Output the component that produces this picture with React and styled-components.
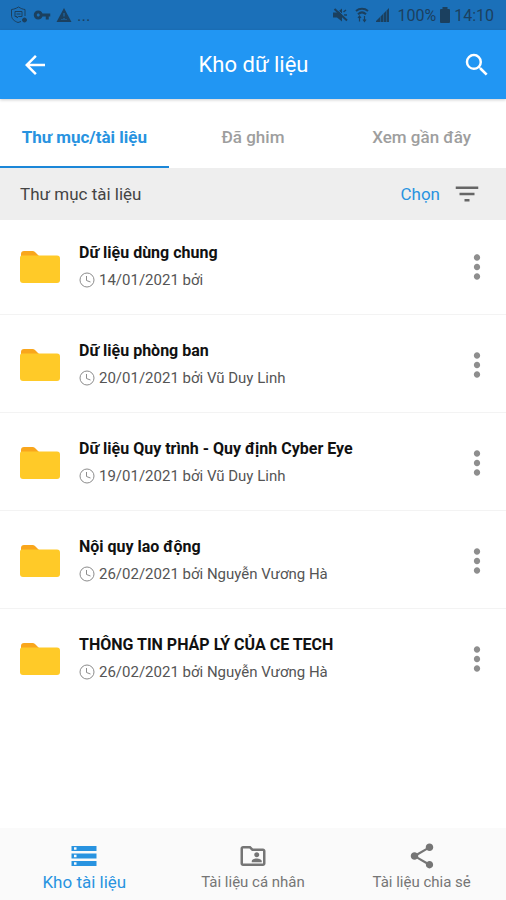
import React, { useState } from "react";
import styled, { createGlobalStyle } from "styled-components";
import {
  MdArrowBack,
  MdSearch,
  MdFilterList,
  MdMoreVert,
  MdStorage,
  MdShare,
  MdOutlineFolderShared,
  MdVpnKey,
} from "react-icons/md";

const tabs = ["Thư mục/tài liệu", "Đã ghim", "Xem gần đây"];

const folders = [
  { name: "Dữ liệu dùng chung", date: "14/01/2021", by: "" },
  { name: "Dữ liệu phòng ban", date: "20/01/2021", by: "Vũ Duy Linh" },
  {
    name: "Dữ liệu Quy trình - Quy định Cyber Eye",
    date: "19/01/2021",
    by: "Vũ Duy Linh",
  },
  { name: "Nội quy lao động", date: "26/02/2021", by: "Nguyễn Vương Hà" },
  {
    name: "THÔNG TIN PHÁP LÝ CỦA CE TECH",
    date: "26/02/2021",
    by: "Nguyễn Vương Hà",
  },
];

const navItems = [
  { label: "Kho tài liệu", Icon: MdStorage },
  { label: "Tài liệu cá nhân", Icon: MdOutlineFolderShared },
  { label: "Tài liệu chia sẻ", Icon: MdShare },
];

const ShieldIcon = () => (
  <svg width="18" height="18" viewBox="0 0 18 18" fill="none" stroke="currentColor">
    <path d="M8 16.500C4 15 1.500 13 1.500 9V3.500C4 3.200 6 2.500 8.500 1c2.500 1.500 4 2.200 6.500 2.500V10M8 16.500l3-1" />
    <path d="M5 5.500h7v5H8.500L7 12v-1.500H5zM6.500 8h4" />
    <circle cx="14.500" cy="14" r="2" fill="currentColor" />
  </svg>
);

const WarningIcon = () => (
  <svg width="16" height="16" viewBox="0 0 16 16">
    <path d="M8 1 15.500 15H.5z" fill="currentColor" />
    <path d="M8 6v3.500M8 11v2M5.500 12.500h1M9.500 12.500h1" stroke="#1b70b9" strokeWidth="1" />
  </svg>
);

const MuteIcon = () => (
  <svg width="16" height="16" viewBox="0 0 16 16">
    <path d="M1 5.500h4L10 1.500v13L5 10.500H1z" fill="currentColor" />
    <path d="M11.500 5 14 3M12 8h3" stroke="currentColor" strokeWidth="1.500" />
    <path d="M4 1.500 15.500 12" stroke="#1b70b9" strokeWidth="1" />
    <path d="M2.500 2 15 13.500" stroke="currentColor" strokeWidth="2" />
  </svg>
);

const WifiIcon = () => (
  <svg width="14" height="16" viewBox="0 0 14 16" fill="none" stroke="currentColor">
    <path d="M1 4c3.500-3 8.500-3 12 0" strokeWidth="2" />
    <path d="M3 7.200c2.400-2.200 5.600-2.200 8 0" strokeWidth="2" />
    <path d="M4.500 14.500v-5M3 11l1.500-2L6 11M9.500 9v5M8 12.500l1.500 2 1.500-2" strokeWidth="1.200" />
  </svg>
);

const SignalIcon = () => (
  <svg width="14" height="16" viewBox="0 0 14 16" fill="currentColor">
    <path d="M0 15v-1l4-4v5zM4.500 15V9.500L7 7v8zM7.500 15V6.500L10 4v11zM10.500 15V3.500L13 1v14z" />
  </svg>
);

const BatteryIcon = () => (
  <svg width="12" height="16" viewBox="0 0 12 16" fill="currentColor">
    <path d="M3.500 0h5v2H10q1 0 1 1v12q0 1-1 1H2q-1 0-1-1V3q0-1 1-1h1.500z" />
  </svg>
);

const FolderIcon = () => (
  <svg width="40" height="32" viewBox="0 0 40 32" aria-hidden="true">
    <path d="M1 12V3q0-3 3-3h8.500q1.500 0 2.500 1l4 4v5z" fill="#f9a61c" />
    <path
      d="M0 6.500Q0 4.500 2 4.500H37q3 0 3 3V29q0 3-3 3H3q-3 0-3-3z"
      fill="#ffca28"
    />
  </svg>
);

const ClockIcon = () => (
  <svg width="16" height="16" viewBox="0 0 16 16" fill="none" stroke="#8c8c8c" aria-hidden="true">
    <circle cx="8" cy="8" r="7" />
    <path d="M7.500 4v4.500l4 1.500" />
  </svg>
);

export default function App() {
  const [tab, setTab] = useState(0);
  const [nav, setNav] = useState(0);

  return (
    <Page>
      <GlobalStyle />
      <StatusBar>
        <StatusGroup>
          <ShieldIcon />
          <MdVpnKey size={18} />
          <WarningIcon />
          <span>...</span>
        </StatusGroup>
        <StatusGroup $right>
          <MuteIcon />
          <WifiIcon />
          <SignalIcon />
          <Readout>
            100%
            <BatteryIcon />
            14:10
          </Readout>
        </StatusGroup>
      </StatusBar>
      <Header>
        <IconButton aria-label="Quay lại">
          <MdArrowBack size={30} />
        </IconButton>
        <h1>Kho dữ liệu</h1>
        <IconButton aria-label="Tìm kiếm">
          <MdSearch size={30} />
        </IconButton>
      </Header>
      <Tabs>
        {tabs.map((label, i) => (
          <Tab key={label} $active={tab === i} onClick={() => setTab(i)}>
            {label}
          </Tab>
        ))}
      </Tabs>
      <SectionBar>
        <h2>Thư mục tài liệu</h2>
        <SelectButton>Chọn</SelectButton>
        <IconButton $color="#666" aria-label="Lọc">
          <MdFilterList size={30} />
        </IconButton>
      </SectionBar>
      <List>
        {folders.map((folder) => (
          <Row key={folder.name}>
            <FolderIcon />
            <Info>
              <Name>{folder.name}</Name>
              <Meta>
                <ClockIcon />
                {folder.date} bởi {folder.by}
              </Meta>
            </Info>
            <IconButton $color="#8e8e8e" aria-label="Tùy chọn">
              <MdMoreVert size={38} />
            </IconButton>
          </Row>
        ))}
      </List>
      <BottomNav>
        {navItems.map(({ label, Icon }, i) => (
          <NavItem key={label} $active={nav === i} onClick={() => setNav(i)}>
            <Icon size={30} />
            {label}
          </NavItem>
        ))}
      </BottomNav>
    </Page>
  );
}

const GlobalStyle = createGlobalStyle`
  * {
    box-sizing: border-box;
  }
  body {
    margin: 0;
    background: #fff;
    font-family: Roboto, "Noto Sans", sans-serif;
  }
  h1, h2, h3, p, ul {
    margin: 0;
    padding: 0;
  }
  svg {
    display: block;
    flex-shrink: 0;
  }
`;

const Button = styled.button`
  border: none;
  padding: 0;
  background: none;
  font-family: inherit;
  cursor: pointer;
`;

const Page = styled.div`
  display: flex;
  flex-direction: column;
  min-height: 100vh;
`;

const StatusBar = styled.div`
  display: flex;
  justify-content: space-between;
  align-items: center;
  height: 30px;
  padding: 0 12px 0 10px;
  background: #1b70b9;
  color: #1b405f;
`;

const StatusGroup = styled.div`
  display: flex;
  align-items: center;
  gap: ${(props) => (props.$right ? "7px" : "5px")};
  font-size: 17px;
`;

const Readout = styled.div`
  display: flex;
  align-items: center;
  gap: 3px;
  font-size: 16px;
`;

const Header = styled.header`
  display: flex;
  align-items: center;
  height: 69px;
  padding: 0 14px 0 20px;
  background: #2196f3;
  color: #fff;
  box-shadow: 0 1px 3px rgba(0, 0, 0, 0.2);
  h1 {
    flex: 1;
    padding-right: 5px;
    font-size: 22px;
    font-weight: 400;
    text-align: center;
  }
`;

const IconButton = styled(Button)`
  display: flex;
  justify-content: center;
  align-items: center;
  color: ${(props) => props.$color || "#fff"};
`;

const Tabs = styled.nav`
  display: grid;
  grid-template-columns: repeat(3, 1fr);
  height: 69px;
`;

const Tab = styled(Button)`
  padding-top: 8px;
  border-bottom: 2px solid ${(props) => (props.$active ? "#1b87d8" : "transparent")};
  color: ${(props) => (props.$active ? "#2893e0" : "#9e9e9e")};
  font-size: 17px;
  font-weight: ${(props) => (props.$active ? 700 : 500)};
`;

const SectionBar = styled.div`
  display: flex;
  align-items: center;
  height: 52px;
  padding: 0 24px 0 20px;
  background: #eeeeee;
  h2 {
    flex: 1;
    color: #444;
    font-size: 17px;
    font-weight: 400;
  }
`;

const SelectButton = styled(Button)`
  margin-right: 12px;
  color: #2893e0;
  font-size: 17px;
`;

const List = styled.ul`
  flex: 1;
  list-style: none;
`;

const Row = styled.li`
  display: flex;
  align-items: center;
  padding: 24px 10px 22px 20px;
  border-bottom: 1px solid #f3f3f3;
  &:first-child {
    padding-top: 21px;
  }
  &:last-child {
    border-bottom: none;
  }
`;

const Info = styled.div`
  display: flex;
  flex: 1;
  flex-direction: column;
  gap: 3px;
  min-width: 0;
  padding-left: 19px;
`;

const Name = styled.h3`
  color: #111;
  font-size: 16px;
  font-weight: 700;
  line-height: 24px;
`;

const Meta = styled.p`
  display: flex;
  align-items: center;
  gap: 4px;
  color: #555;
  font-size: 15px;
  line-height: 24px;
`;

const BottomNav = styled.nav`
  position: sticky;
  bottom: 0;
  display: grid;
  grid-template-columns: repeat(3, 1fr);
  height: 72px;
  background: #fafafa;
`;

const NavItem = styled(Button)`
  display: flex;
  flex-direction: column;
  align-items: center;
  padding-top: 13px;
  color: ${(props) => (props.$active ? "#2893e0" : "#757575")};
  font-size: ${(props) => (props.$active ? "17px" : "15px")};
  line-height: 22px;
`;
